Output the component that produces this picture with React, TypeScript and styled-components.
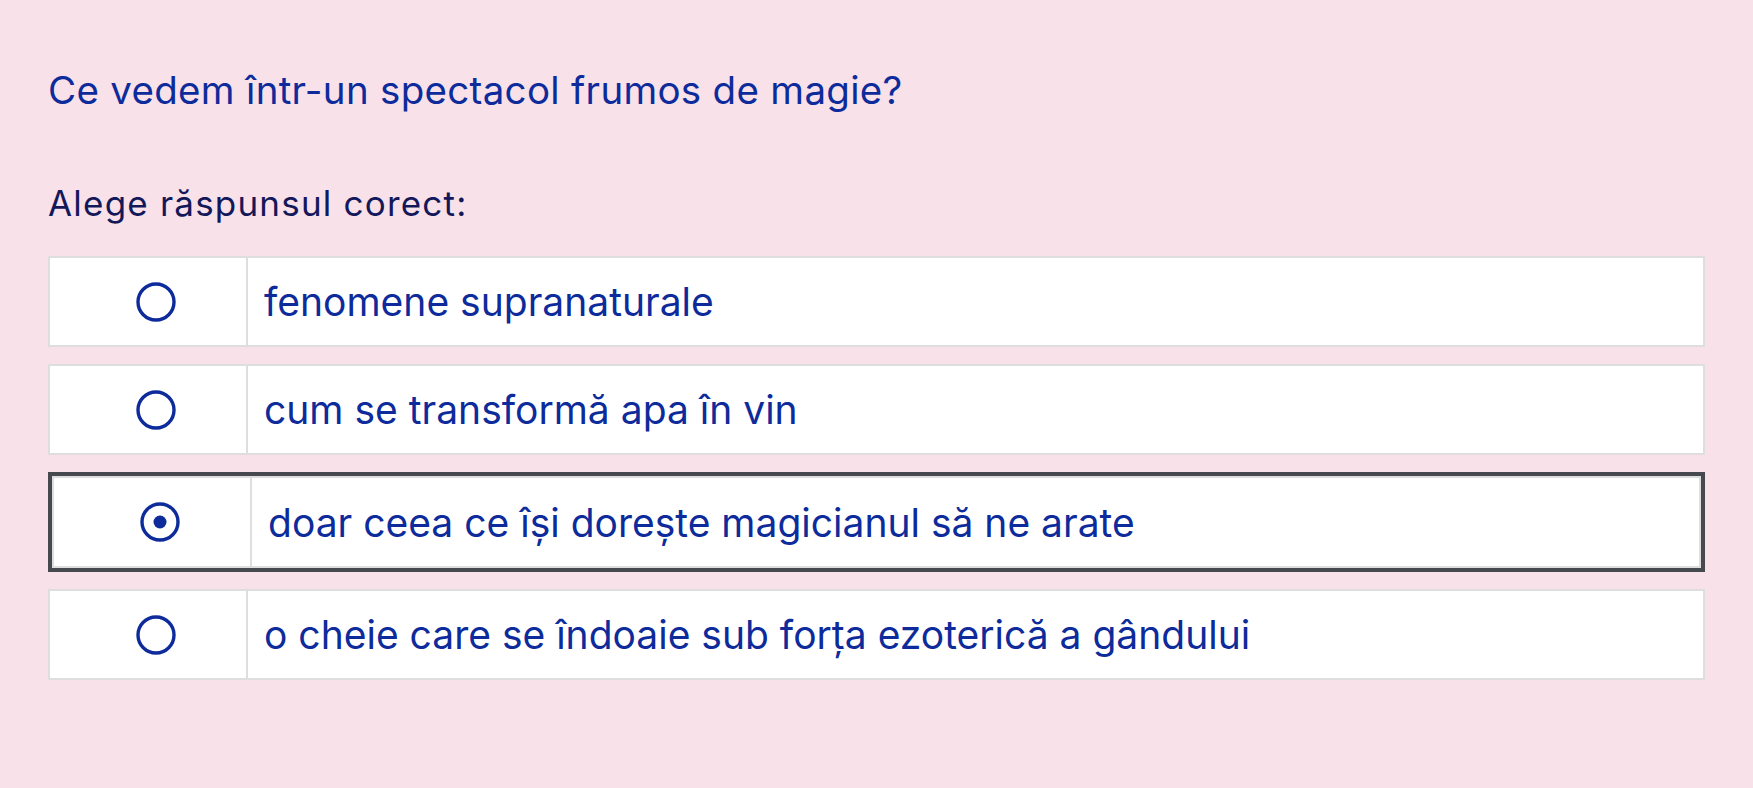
import React, { useState } from 'react';
import styled, { createGlobalStyle } from 'styled-components';

const GlobalStyle = createGlobalStyle`
  html, body {
    margin: 0;
    padding: 0;
    background: #f8e1e9;
  }
  body {
    font-family: Inter, "Noto Sans", "Liberation Sans", sans-serif;
  }
`;

const Page = styled.div`
  min-height: 788px;
  background: #f8e1e9;
  padding: 62px 48px 0 48px;
  box-sizing: border-box;
`;

const Question = styled.h2`
  margin: 0;
  font-size: 38.5px;
  font-weight: 400;
  line-height: 56px;
  letter-spacing: 0.3px;
  color: #0d2b9b;
`;

const Instruction = styled.p`
  margin: 63px 0 0 0;
  font-size: 35px;
  line-height: 44px;
  letter-spacing: 1.2px;
  color: #13185a;
`;

const Options = styled.div`
  margin-top: 31px;
  display: flex;
  flex-direction: column;
  gap: 17px;
`;

const Option = styled.label<{ $selected: boolean }>`
  display: flex;
  align-items: stretch;
  height: ${({ $selected }) => ($selected ? '100px' : '91px')};
  box-sizing: border-box;
  border: ${({ $selected }) => ($selected ? '4px solid #46494d' : 'none')};
  cursor: pointer;
`;

const Inner = styled.div`
  flex: 1;
  display: flex;
  background: #fff;
  border: 2px solid #dedede;
`;

const RadioCell = styled.div`
  width: 198px;
  flex: none;
  display: flex;
  align-items: center;
  justify-content: center;
  padding-left: 16px;
  box-sizing: border-box;
  border-right: 2px solid #dedede;
`;

const TextCell = styled.div`
  flex: 1;
  display: flex;
  align-items: center;
  padding-left: 16px;
  font-size: 39px;
  color: #0d2b9b;
`;

const Radio = ({ checked }: { checked: boolean }) => (
  <svg width="40" height="40" viewBox="0 0 40 40">
    <circle cx="20" cy="20" r="18" fill="none" stroke="#0d2b9b" strokeWidth="3.4" />
    {checked && <circle cx="20" cy="20" r="6.5" fill="#0d2b9b" />}
  </svg>
);

const answers = [
  'fenomene supranaturale',
  'cum se transformă apa în vin',
  'doar ceea ce își dorește magicianul să ne arate',
  'o cheie care se îndoaie sub forța ezoterică a gândului',
];

const App = () => {
  const [picked, setPicked] = useState(2);

  return (
    <>
      <GlobalStyle />
      <Page>
        <Question>Ce vedem într-un spectacol frumos de magie?</Question>
        <Instruction>Alege răspunsul corect:</Instruction>
        <Options>
          {answers.map((a, i) => (
            <Option key={a} $selected={picked === i} onClick={() => setPicked(i)}>
              <Inner>
                <RadioCell>
                  <Radio checked={picked === i} />
                </RadioCell>
                <TextCell>{a}</TextCell>
              </Inner>
            </Option>
          ))}
        </Options>
      </Page>
    </>
  );
};

export default App;
